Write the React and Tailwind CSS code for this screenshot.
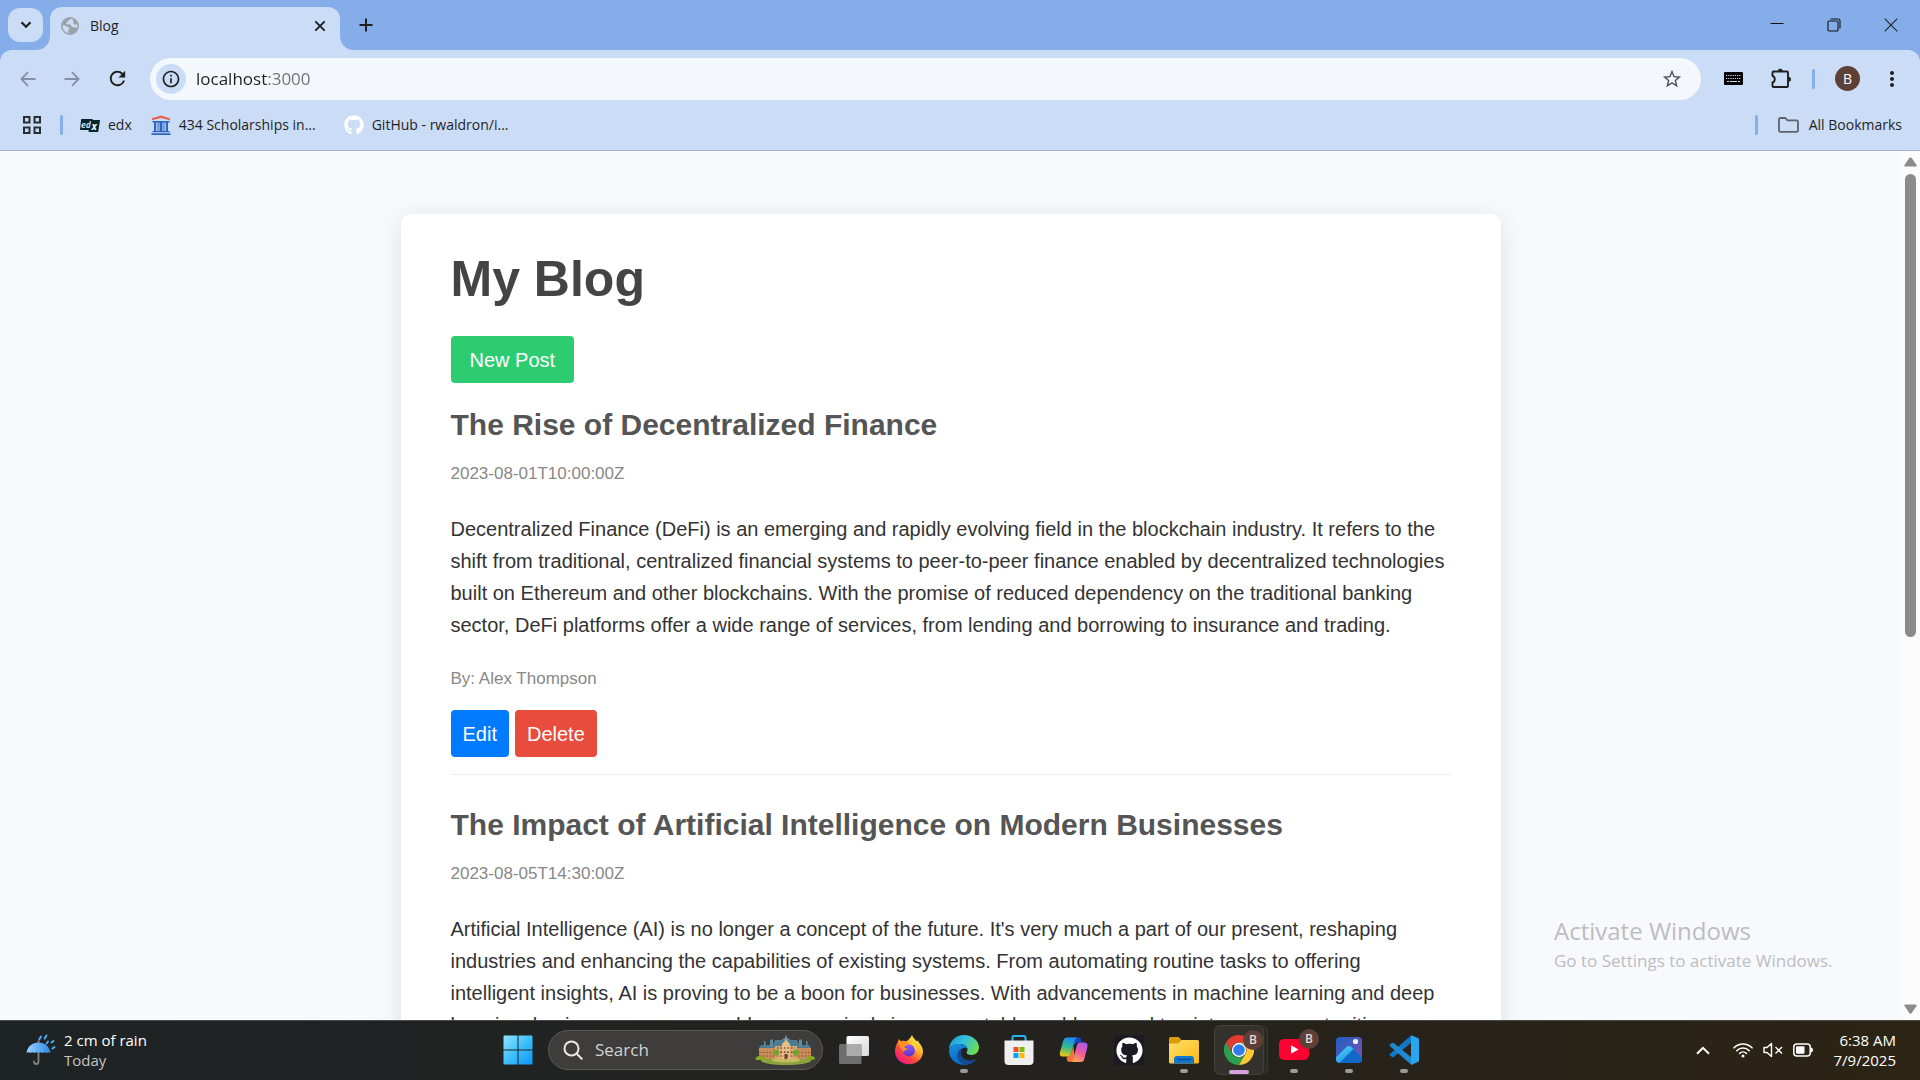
import React from "react";
import { MdOutlineInfo, MdStarOutline, MdMoreVert, MdRefresh } from "react-icons/md";
import { FaGithub } from "react-icons/fa";

const posts = [
  {
    title: "The Rise of Decentralized Finance",
    date: "2023-08-01T10:00:00Z",
    body: "Decentralized Finance (DeFi) is an emerging and rapidly evolving field in the blockchain industry. It refers to the shift from traditional, centralized financial systems to peer-to-peer finance enabled by decentralized technologies built on Ethereum and other blockchains. With the promise of reduced dependency on the traditional banking sector, DeFi platforms offer a wide range of services, from lending and borrowing to insurance and trading.",
    author: "Alex Thompson",
  },
  {
    title: "The Impact of Artificial Intelligence on Modern Businesses",
    date: "2023-08-05T14:30:00Z",
    body: "Artificial Intelligence (AI) is no longer a concept of the future. It's very much a part of our present, reshaping industries and enhancing the capabilities of existing systems. From automating routine tasks to offering intelligent insights, AI is proving to be a boon for businesses. With advancements in machine learning and deep learning, businesses can now address seemingly insurmountable problems and tap into new opportunities.",
  },
];

/* ---------- Browser chrome ---------- */

function Flare({ flip }) {
  return (
    <svg viewBox="0 0 14 14" className={flip ? "w-3.5 h-3.5 -scale-x-100" : "w-3.5 h-3.5"} aria-hidden="true">
      <path d="M14 0v14H0C8 14 14 8 14 0z" fill="#cbdcf6" />
    </svg>
  );
}

function TabStrip() {
  return (
    <header className="flex h-[50px] bg-[#85adea] text-[#1f1f1f]">
      <button aria-label="Search tabs" className="mt-2 ml-2 flex h-[34px] w-[35px] items-center justify-center rounded-xl bg-[#cbdcf6]">
        <svg viewBox="0 0 12 8" className="h-2 w-3" fill="none" stroke="#1f1f1f" strokeWidth="2.2"><path d="M1.5 1.3 6 5.8l4.5-4.5" /></svg>
      </button>
      <div className="-ml-[7px] flex items-end"><Flare /></div>
      <div className="mt-[7px] flex w-[290px] items-center rounded-t-xl bg-[#cbdcf6] pb-1.5 pl-[11px] pr-2.5">
        <svg viewBox="0 0 18 18" className="size-[18px]" aria-hidden="true">
          <circle cx="9" cy="9" r="9" fill="#9ba2aa" />
          <path d="M2 8c1 .3 3 .6 3.800 1.600.7.9 2.400.6 2.600 1.700.2 1-1.200 1.300-1.200 2.300v2.600C4 15.300 1.700 12.500 1.700 9.500zM9.500 1.800c-.2 1-1.300 1.500-2.200 1.800-.9.300-.2 1.700-1.300 2-.9.300-1.300.9-.8 1.500.8.900 3.300-.2 4.300.5 1.100.8.5 2 1.700 2.400 1.300.400 2.300-.4 3.300.2.700.4 1 .8 1.400 1.200.5-1.200.6-3 .2-4.200-1 .3-2.400.7-3.200 0-.9-.8 0-2-.7-2.800-.6-.8-.4-1.600.2-2.100z" fill="#cbdcf6" />
        </svg>
        <span className="ml-[11px] flex-1 text-sm">Blog</span>
        <button aria-label="Close tab" className="flex size-5 items-center justify-center">
          <svg viewBox="0 0 12 12" className="size-3" stroke="#1f1f1f" strokeWidth="1.900"><path d="M1.300 1.300l9.400 9.400M10.700 1.300l-9.400 9.400" /></svg>
        </button>
      </div>
      <div className="flex items-end"><Flare flip /></div>
      <button aria-label="New tab" className="flex w-6 items-center justify-center">
        <svg viewBox="0 0 14 14" className="size-3.5" stroke="#1f1f1f" strokeWidth="2"><path d="M7 .5v13M.5 7h13" /></svg>
      </button>
      <div className="ml-auto flex">
        <button aria-label="Minimize" className="flex w-[57px] items-center justify-center">
          <svg viewBox="0 0 14 14" className="size-3.5" stroke="#111" strokeWidth="1"><path d="M.5 5.500h13" /></svg>
        </button>
        <button aria-label="Restore" className="flex w-[57px] items-center justify-center">
          <svg viewBox="0 0 14 14" className="size-3.5" stroke="#111" strokeWidth="1.100" fill="none"><rect x="1" y="3" width="10" height="10" rx="1" /><path d="M3.500 1h7.500a2 2 0 0 1 2 2v7.500" /></svg>
        </button>
        <button aria-label="Close" className="flex w-[58px] items-center justify-center">
          <svg viewBox="0 0 14 14" className="size-3.5" stroke="#222" strokeWidth="1.100"><path d="M.7.7l12.600 12.600M13.300.7.7 13.300" /></svg>
        </button>
      </div>
    </header>
  );
}

function Arrow({ flip }) {
  return (
    <svg viewBox="0 0 16 16" className={flip ? "size-4 -scale-x-100" : "size-4"} fill="none" stroke="#8390a6" strokeWidth="1.800">
      <path d="M15.500 8H1.500M8 1.200 1.400 8 8 14.800" />
    </svg>
  );
}

function Toolbar() {
  return (
    <div className="bg-[#85adea]">
      <div className="flex h-[57px] items-center rounded-t-xl bg-[#cbdcf6] pl-3">
        <button aria-label="Back" className="flex w-8 justify-center"><Arrow /></button>
        <button aria-label="Forward" className="ml-3 flex w-8 justify-center"><Arrow flip /></button>
        <button aria-label="Reload" className="ml-[13px] flex w-8 justify-center"><MdRefresh className="size-[23px] text-[#1f1f1f]" /></button>
        <div className="ml-[17px] flex h-[42px] flex-1 items-center rounded-full bg-[#f4f8fd] pl-1.5 pr-[18px]">
          <button aria-label="View site information" className="flex size-[30px] items-center justify-center rounded-full bg-[#cbdcf6]">
            <MdOutlineInfo className="size-5 text-[#1f1f1f]" />
          </button>
          <input
            aria-label="Address"
            defaultValue="localhost:3000"
            className="ml-2.5 min-w-0 flex-1 bg-[linear-gradient(90deg,#1f1f1f_71px,#6b7076_71px)] bg-clip-text text-[17px] text-transparent outline-none"
          />
          <button aria-label="Bookmark this tab"><MdStarOutline className="size-[22px] text-[#50555c]" /></button>
        </div>
        <button aria-label="Keyboard extension" className="ml-[23px]">
          <svg viewBox="0 0 19 13" className="h-[13px] w-[19px]">
            <rect width="19" height="13" rx="1" fill="#000" />
            <path d="M2 3.500h15M2 6.500h15" stroke="#cbdcf6" strokeWidth="1.200" strokeDasharray="1.200 1" />
            <path d="M3 9.500h2M6 9.500h7M14 9.500h2" stroke="#cbdcf6" strokeWidth="1.200" />
          </svg>
        </button>
        <button aria-label="Extensions" className="ml-[27px]">
          <svg viewBox="0 0 22 22" className="size-[22px]">
            <path d="M2.500 4.500q0-1 1-1H17q1 0 1 1V18q0 1-1 1H3.500q-1 0-1-1v-3.500c3-.7 3-5.800 0-6.500z" fill="none" stroke="#1f1f1f" strokeWidth="1.900" strokeLinejoin="round" />
            <path d="M7.800 3.200a2.500 2.500 0 0 1 5 0zM18.500 8.700a2.500 2.500 0 0 1 0 5z" fill="#1f1f1f" />
          </svg>
        </button>
        <span className="ml-5 h-5 w-[3px] rounded bg-[#87aeea]" />
        <button aria-label="Profile" className="ml-5 flex size-[25px] items-center justify-center rounded-full bg-[#5d4037] text-sm text-white">B</button>
        <button aria-label="Menu" className="ml-5 mr-4"><MdMoreVert className="size-6 text-[#1f1f1f]" /></button>
      </div>
    </div>
  );
}

function Bookmarks() {
  return (
    <nav aria-label="Bookmarks" className="flex h-11 items-center border-b border-[#a0b4d8] bg-[#cbdcf6] pb-2 pl-[22px] pr-[18px] text-sm text-[#1f1f1f]">
      <button aria-label="Apps">
        <svg viewBox="0 0 20 20" className="size-5" fill="none" stroke="#2a2e33" strokeWidth="2"><path d="M2 2h5.500v5.500H2zM12.500 2H18v5.500h-5.500zM2 12.500h5.500V18H2zM12.500 12.500H18V18h-5.500z" /></svg>
      </button>
      <span className="ml-[18px] h-5 w-[3px] rounded bg-[#87aeea]" />
      <a href="#edx" className="ml-[17px] flex items-center gap-2">
        <svg viewBox="0 0 20 14" className="h-3.5 w-5">
          <path d="M1.200 1h11.500l-1.600 11H0zM10 2h10l-1.800 12H8.500z" fill="#02262b" />
          <text x="1" y="9.500" fontSize="8.500" fontWeight="700" fontStyle="italic" fill="#cfdcf0">ed</text>
          <text x="11.500" y="11.500" fontSize="10" fontWeight="700" fontStyle="italic" fill="#fff">x</text>
        </svg>
        edx
      </a>
      <a href="#scholarships" className="ml-[19px] flex items-center gap-2">
        <svg viewBox="0 0 20 20" className="size-5">
          <path d="M1 5.200v-2L10 .5l9 2.700v2L10 2.900z" fill="#e8604c" />
          <path d="M1.500 6h17v1.500h-17zM1.500 16h17v1.200h-17zM.5 18.300h19V20H.5zM3 7h2.200v9H3zM6.500 7h1v9h-1zM8.500 7h3v9h-3zM12.500 7h1v9h-1zM14.800 7H17v9h-2.200z" fill="#2c66bf" />
        </svg>
        434 Scholarships in...
      </a>
      <a href="#github" className="ml-7 flex items-center gap-2">
        <FaGithub className="size-5 text-white" />
        GitHub - rwaldron/i...
      </a>
      <span className="ml-auto h-5 w-[3px] rounded bg-[#87aeea]" />
      <button className="ml-5 flex items-center gap-2.5">
        <svg viewBox="0 0 21 16" className="h-4 w-[21px]" fill="none" stroke="#5f6368" strokeWidth="1.800"><path d="M1 13V2.500Q1 1 2.500 1h4.800l2.200 2.300h9Q20 3.300 20 4.800V13q0 1.800-1.500 1.800h-16Q1 14.800 1 13z" /></svg>
        All Bookmarks
      </button>
    </nav>
  );
}

/* ---------- Page ---------- */

function Post({ title, date, body, author }) {
  return (
    <article className="mb-[26px] border-b border-[#eeeeee] pb-[17px]">
      <h2 className="text-3xl leading-[48px] font-bold text-[#555]">{title}</h2>
      <p className="mt-[11px] text-[17px] leading-[27px] text-[#888]">{date}</p>
      <p className="mt-[26px] text-xl leading-8">{body}</p>
      {author && <p className="mt-6 text-[17px] leading-[27px] text-[#888]">By: {author}</p>}
      <div className="mt-[18px] flex gap-1.5 text-xl leading-6 text-white">
        <button className="rounded bg-[#007bff] px-[12px] pt-3 pb-[11px]">Edit</button>
        <button className="rounded bg-[#e74c3c] px-[12px] pt-3 pb-[11px]">Delete</button>
      </div>
    </article>
  );
}

function Page() {
  return (
    <div className="relative flex min-h-0 flex-1 bg-[#f7f9fd]">
      <main className="min-w-0 flex-1 overflow-hidden px-6 pt-[63px] font-['Liberation_Sans',Arial,sans-serif] text-[#333]">
        <div className="mx-auto w-full max-w-[1100px] rounded-[10px] bg-white px-[50px] py-[25px] shadow-[0_4px_25px_rgba(0,0,0,0.1)]">
          <h1 className="text-[50px] leading-[80px] font-bold text-[#444]">My Blog</h1>
          <a href="#new" className="mt-[17px] inline-block rounded bg-[#2ecc71] px-[19px] pt-3 pb-[11px] text-xl leading-6 text-white">New Post</a>
          <div className="mt-[18px]">
            {posts.map((p) => <Post key={p.date} {...p} />)}
          </div>
        </div>
      </main>
      <div className="flex w-[19px] flex-col items-center bg-[#fcfcfc] py-1.5">
        <svg viewBox="0 0 13 10" className="h-2.5 w-[13px]" fill="#8b8b8b"><path d="M5.500.8q1-1.200 2 0l5 7.200q.8 1.500-1 1.500h-10q-1.800 0-1-1.500z" /></svg>
        <div className="mt-[7px] h-[54%] w-[11px] rounded-full bg-[#8b8b8b]" />
        <svg viewBox="0 0 13 10" className="mt-auto h-2.5 w-[13px] -scale-y-100" fill="#8b8b8b"><path d="M5.500.8q1-1.200 2 0l5 7.200q.8 1.500-1 1.500h-10q-1.800 0-1-1.500z" /></svg>
      </div>
      <aside className="pointer-events-none absolute right-20 bottom-[46px] w-[286px] text-[#bcbdc0]">
        <p className="text-2xl leading-[34px]">Activate Windows</p>
        <p className="text-[17px] leading-[26px]">Go to Settings to activate Windows.</p>
      </aside>
    </div>
  );
}

/* ---------- Taskbar icons ---------- */

const icon = "size-[30px]";

const StartIcon = () => (
  <svg viewBox="0 0 30 30" className={icon}>
    <defs><linearGradient id="win" x1="0" y1="0" x2="1" y2="1"><stop offset="0" stopColor="#8fe3ff" /><stop offset=".5" stopColor="#3fc0fb" /><stop offset="1" stopColor="#0a95f5" /></linearGradient></defs>
    <path d="M1.500.5H14.500V14.500H.5V1.500q0-1 1-1zM15.500.5H28.500q1 0 1 1V14.500h-14zM.5 15.500h14v14h-13q-1 0-1-1zM15.500 15.500h14v13q0 1-1 1h-13z" fill="url(#win)" />
  </svg>
);
const TaskViewIcon = () => (
  <svg viewBox="0 0 30 30" className={icon}>
    <defs><linearGradient id="tv" x1="0" y1="0" x2="1" y2="1"><stop offset="0" stopColor="#fff" /><stop offset="1" stopColor="#d8d8d8" /></linearGradient></defs>
    <rect x="7.500" y="1" width="22.500" height="20" rx="1.500" fill="url(#tv)" />
    <rect x="0" y="9" width="22.500" height="20" rx="1.500" fill="#6e6e6e" />
    <path d="M7.500 9h15v12h-15z" fill="#ababab" />
  </svg>
);
const FirefoxIcon = () => (
  <svg viewBox="0 0 30 30" className={icon}>
    <defs>
      <linearGradient id="ffx" x1=".85" y1=".1" x2=".2" y2=".95"><stop offset="0" stopColor="#fff44f" /><stop offset=".35" stopColor="#ffb02e" /><stop offset=".65" stopColor="#ff4a3a" /><stop offset="1" stopColor="#f0148c" /></linearGradient>
      <linearGradient id="ffp" x1="0" y1="0" x2="0" y2="1"><stop offset="0" stopColor="#9059ff" /><stop offset="1" stopColor="#5b35c4" /></linearGradient>
    </defs>
    <path d="M18 0c1 3 3 4 4.500 6.200l1.700-.7c0 1 .3 1.600 1 2.500 2 2.200 3.800 4.700 3.800 8.500a14 12.800 0 0 1-28 0c0-4 1-7 3-9.800L4.500 4 7 6.200C9 5.600 10.500 5.800 12 6.500 14 5.500 16.500 3 18 0z" fill="url(#ffx)" />
    <circle cx="15" cy="15.500" r="6" fill="url(#ffp)" />
    <path d="M4 7.500C6 6 9 5.800 11.500 7.200l3.500.6c-.3 1.600-1.500 2.400-3.500 2.800l-1.500 2.600c1.500-.5 3 .2 4 1.400-2-.2-3.200.8-4.500 2.200C7 15 5.500 11 4 7.500z" fill="#ff9322" />
    <path d="M14 8c4 0 7.500 3 7 8 2-2 1.500-6-.5-8.500z" fill="#ffd83a" />
  </svg>
);
const EdgeIcon = () => (
  <svg viewBox="0 0 30 30" className={icon}>
    <defs>
      <linearGradient id="eg" x1="0" y1=".2" x2="1" y2=".6"><stop offset="0" stopColor="#1e9de0" /><stop offset=".5" stopColor="#35c1d8" /><stop offset="1" stopColor="#6fe04a" /></linearGradient>
      <linearGradient id="eb" x1="0" y1="0" x2=".6" y2="1"><stop offset="0" stopColor="#1790e0" /><stop offset="1" stopColor="#0a63bd" /></linearGradient>
    </defs>
    <path d="M0 14C.5 6 7 0 15 0s15 5.500 15 12.500c0 4.500-3.500 7.500-7.500 7.500-3 0-5-1-5-2.200 0-.7 1-1.300 1-3.300 0-3-3-5.500-7-5.500C6 9 1.500 11 0 14z" fill="url(#eg)" />
    <path d="M0 15.500C.5 11.500 5 9 10 9c4.500 0 8 2.200 8.500 5-2-2.500-7-1.500-7 3.500 0 6 6 9.500 11 8.500 2-.4 3.500-1.200 4.500-2C24.500 27.800 20 30 15 30 6.500 30 0 23.500 0 15.500z" fill="url(#eb)" />
    <path d="M11.500 17.500c0-2 .8-3.500 2-4.200-3 .7-5 3.500-5 7.200 0 4.500 3.500 9 8.500 9.300 4-.4 8-2.500 10.300-6-5.300 3.700-15.800 1.200-15.800-6.300z" fill="#134a93" />
  </svg>
);
const StoreIcon = () => (
  <svg viewBox="0 0 30 30" className={icon}>
    <path d="M8.500 6V2.500Q8.500 1 10 1h10q1.500 0 1.500 1.500V6" fill="none" stroke="#22b4ea" strokeWidth="2" />
    <path d="M.5 5.500h29V26q0 4-4 4h-21q-4 0-4-4z" fill="#efefef" />
    <path d="M9.500 12h5v5h-5z" fill="#f25022" /><path d="M15.500 12h5v5h-5z" fill="#7fba00" /><path d="M9.500 18h5v5h-5z" fill="#00a4ef" /><path d="M15.500 18h5v5h-5z" fill="#ffb900" />
  </svg>
);
const CopilotIcon = () => (
  <svg viewBox="0 0 30 30" className={icon}>
    <defs>
      <linearGradient id="cl" x1=".5" y1="0" x2=".3" y2="1"><stop offset="0" stopColor="#1b8cf2" /><stop offset=".5" stopColor="#34b98b" /><stop offset="1" stopColor="#f2c811" /></linearGradient>
      <linearGradient id="cr" x1=".7" y1="0" x2=".3" y2="1"><stop offset="0" stopColor="#a55bf0" /><stop offset=".5" stopColor="#ee5a9c" /><stop offset="1" stopColor="#ffa552" /></linearGradient>
    </defs>
    <path d="M8 2.500h11c2.500 0 3 1 3.800 5h-3.300c-2 0-3 .8-3.600 2.500z" fill="#1746c7" />
    <path d="M8.500 2.500H18c-1.500 1-2 2-2.500 4l-3.200 11.500c-.8 2.500-1.800 3.500-4 3.500H4c-3 0-3.700-2-3-4.500l3.200-11c.8-2.500 1.800-3.500 4.300-3.500z" fill="url(#cl)" />
    <path d="M8 21.500c2.500 0 3.600-1 4.300-3.500l2.200-7 1 10-1.300 3.500c-.5 1.500-1.500 2.500-3.200 2.500-3.500 0-3.500-3.500-3-5.500z" fill="#f4743b" />
    <path d="M21.500 27H12c1.500-1 2-2 2.500-4l3.200-12c.7-2.500 1.800-3.500 4-3.500H25c3.500 0 4 2.500 3.300 5l-2.700 10.500c-.6 3-1.600 4-4.100 4z" fill="url(#cr)" />
  </svg>
);
const GithubTile = () => (
  <span className="flex size-[30px] items-center justify-center bg-[#1c1922]"><FaGithub className="size-[27px] text-white" /></span>
);
const FolderIcon = () => (
  <svg viewBox="0 0 30 30" className={icon}>
    <defs><linearGradient id="fo" x1="0" y1="0" x2="1" y2="1"><stop offset="0" stopColor="#ffdf70" /><stop offset="1" stopColor="#fbb912" /></linearGradient></defs>
    <path d="M0 3.500Q0 2 1.500 2h7.500q1 0 1.800 1L13 6v3H0z" fill="#dd9b06" />
    <path d="M0 8.500h9L12.500 5h16Q30 5 30 6.500V27q0 1.500-1.500 1.500h-27Q0 28.500 0 27z" fill="url(#fo)" />
    <path d="M5 28.500V24q0-3 3-3h14q3 0 3 3v4.500z" fill="#1276cf" /><path d="M8.500 24.500h13" stroke="#0b4a94" strokeWidth="1.400" />
  </svg>
);
const ChromeIcon = () => (
  <svg viewBox="0 0 30 30" className={icon}>
    <path d="M15 0a15 15 0 0 1 13 7.500H15a7.500 7.500 0 0 0-6.500 11.250L2 7.500A15 15 0 0 1 15 0z" fill="#e33b2e" />
    <path d="M2 7.500l6.500 11.250A7.500 7.500 0 0 0 21.500 18.750L15 30A15 15 0 0 1 2 7.500z" fill="#2da04e" />
    <path d="M28 7.500A15 15 0 0 1 15 30l6.500-11.250A7.500 7.500 0 0 0 15 7.500z" fill="#fcc934" />
    <circle cx="15" cy="15" r="7.200" fill="#fff" /><circle cx="15" cy="15" r="5.800" fill="#2f7bf0" />
  </svg>
);
const YoutubeIcon = () => (
  <svg viewBox="0 0 30 30" className={icon}><rect x="0" y="4" width="30" height="21" rx="5" fill="#ff0033" /><path d="M12 10.300v8.400l7.500-4.200z" fill="#fff" /></svg>
);
const PhotosIcon = () => (
  <svg viewBox="0 0 30 30" className={icon}>
    <defs>
      <linearGradient id="ph" x1="0" y1="0" x2="1" y2="1"><stop offset="0" stopColor="#1d5fc0" /><stop offset=".6" stopColor="#5a58b8" /><stop offset="1" stopColor="#8a4fa8" /></linearGradient>
      <linearGradient id="pm" x1=".2" y1="0" x2=".9" y2="1"><stop offset="0" stopColor="#4fdcfb" /><stop offset="1" stopColor="#1482dd" /></linearGradient>
    </defs>
    <rect x="2" y="2" width="26" height="26" rx="4" fill="url(#ph)" />
    <path d="M2 22.500 12.500 12q2.500-2.200 5 0L28 22.500V25q-.5 3-4 3H6q-3.500 0-4-3z" fill="#1268c8" />
    <path d="M2 22.500 12.500 12q2.500-2.200 5 0l2 2L5.500 28Q2.500 27.500 2 25z" fill="url(#pm)" />
    <circle cx="21.500" cy="6.500" r="2.600" fill="#f1f3fb" />
  </svg>
);
const VscodeIcon = () => (
  <svg viewBox="0 0 30 30" className={icon}>
    <path d="M1 20.500 3 22q1 .6 2-.2L22 8V.5L.8 19q-.6.800.2 1.500z" fill="#0f78c4" />
    <path d="M1 9.500 3 8q1-.6 2 .2L22 22v7.500L.8 11q-.6-.8.200-1.500z" fill="#1f8ad2" />
    <path d="M22 .3 29 3q1 .6 1 1.500v21q0 .9-1 1.500l-7 3z" fill="#2aa5f0" />
  </svg>
);
const UmbrellaIcon = () => (
  <svg viewBox="0 0 30 32" className="h-8 w-[30px]">
    <defs><linearGradient id="um" x1="0" y1="0" x2="1" y2="0"><stop offset="0" stopColor="#9ad0ff" /><stop offset="1" stopColor="#2b8ae6" /></linearGradient></defs>
    <path d="M12.500 7.500v20q0 2.500-2.200 2.500T8 27.500" fill="none" stroke="#8a8080" strokeWidth="1.800" strokeLinecap="round" />
    <path d="M.5 19C1.500 12 6.500 8.500 12.500 8.500S23.500 12 24.500 19q-2-1.500-4 0-2-1.500-4 0-2-1.500-4 0-2-1.500-4 0-2-1.500-4 0-2-1.500-4 0z" fill="url(#um)" />
    <path d="M15 2.500l-1.800 3M20.500 1.500l-1.800 3M27.500 7l-2 1.500M22 7.500l-1.500 2M28.500 13l-2 1.500" stroke="#4fb0f7" strokeWidth="1.900" strokeLinecap="round" />
  </svg>
);
const PalaceIcon = () => (
  <svg viewBox="0 0 60 32" className="h-8 w-[60px]" aria-hidden="true">
    <ellipse cx="31" cy="26.500" rx="25" ry="4.500" fill="#8ba23f" /><ellipse cx="31" cy="26" rx="14" ry="2.500" fill="#c3bd5c" />
    <path d="M4 14h52v11H4z" fill="#c98d5a" /><path d="M20 11h22v14H20z" fill="#dda870" />
    <path d="M4 14l2-3h12l2-5h6l3-2h4l3 2h6l2 5h10l2 3H42v-2H20v2z" fill="#4f7c93" />
    <path d="M31 .5 33 7h-4z" fill="#8a9aa3" /><path d="M27 10l4-4 4 4v15h-8z" fill="#e9bd86" />
    <path d="M4 18.500h52M4 22h52" stroke="#8d5a3c" strokeWidth="1" strokeDasharray="2 1.500" />
    <path d="M22 14h18M22 18h18" stroke="#7a5742" strokeWidth="1.600" strokeDasharray="1.500 2" />
    <path d="M15 5.500h3v7h-3zM44 5.500h3v7h-3zM9 7h1.500v5H9zM51 7h1.500v5H51z" fill="#5d8ba1" />
    <circle cx="21" cy="18.500" r="3" fill="#6fa52e" /><circle cx="41" cy="18.500" r="3" fill="#6fa52e" />
    <path d="M0 25q3-5 6-2 4-1 5 3H2zM52 25q1-4 4-3 4 0 4 3l-3 1z" fill="#86ad1f" />
    <path d="M29.500 20h3v5h-3z" fill="#6e4530" />
  </svg>
);

const apps = [
  { name: "Task View", Icon: TaskViewIcon },
  { name: "Firefox", Icon: FirefoxIcon },
  { name: "Edge", Icon: EdgeIcon, open: true },
  { name: "Microsoft Store", Icon: StoreIcon },
  { name: "Copilot", Icon: CopilotIcon },
  { name: "GitHub", Icon: GithubTile },
  { name: "File Explorer", Icon: FolderIcon, open: true },
  { name: "Chrome", Icon: ChromeIcon, active: true, badge: true },
  { name: "YouTube", Icon: YoutubeIcon, open: true, badge: true },
  { name: "Photos", Icon: PhotosIcon, open: true },
  { name: "Visual Studio Code", Icon: VscodeIcon, open: true },
];

function AppButton({ name, Icon, open, active, badge }) {
  return (
    <button
      aria-label={name}
      className={
        active
          ? "relative flex h-[50px] w-[50px] items-center justify-center rounded-md border border-[#41403b] bg-[#33322d] shadow-[3px_0_0_#2a2924,4px_0_0_#3a3934]"
          : "relative flex h-[50px] w-[50px] items-center justify-center"
      }
    >
      <Icon />
      {badge && <span className="absolute top-1 right-0 flex size-5 items-center justify-center rounded-full bg-[#5d4037] text-xs font-semibold text-[#e4dad6]">B</span>}
      {open && <span className="absolute bottom-0.5 h-1 w-2 rounded-full bg-[#9a9a98]" />}
      {active && <span className="absolute bottom-0 h-1 w-5 rounded-full bg-[#d9a0e0]" />}
    </button>
  );
}

function Taskbar() {
  return (
    <footer className="grid h-[60px] grid-cols-[1fr_auto_1fr] items-center border-t border-[#4a4b48] bg-linear-to-r from-[#1e2325] via-[#23221f] to-[#2c2414] pb-px text-[15px] text-white">
      <button className="flex w-fit items-center gap-2 pl-[26px] text-left leading-5">
        <UmbrellaIcon />
        <span>2 cm of rain<br /><span className="text-[#c3c4c4]">Today</span></span>
      </button>
      <div className="flex items-center pl-3">
        <button aria-label="Start" className="mr-[15px]"><StartIcon /></button>
        <label className="mr-[6px] flex h-10 w-[275px] items-center rounded-full border border-[#5a5a58] bg-[#3e3d3c] pr-[7px] pl-3.5">
          <svg viewBox="0 0 20 20" className="size-5" fill="none" stroke="#e8e8e8" strokeWidth="2"><circle cx="8.500" cy="8.500" r="7" /><path d="M13.500 13.500l5.200 5.200" strokeLinecap="round" /></svg>
          <input aria-label="Search" placeholder="Search" className="ml-3 min-w-0 flex-1 text-[17px] outline-none placeholder:text-[#d2d2d2]" />
          <PalaceIcon />
        </label>
        <div className="flex gap-[5px]">{apps.map((a) => <AppButton key={a.name} {...a} />)}</div>
      </div>
      <div className="flex items-center justify-end pr-6">
        <button aria-label="Show hidden icons">
          <svg viewBox="0 0 14 9" className="h-[9px] w-3.5" fill="none" stroke="#fff" strokeWidth="2"><path d="M1 7.800 7 1.800l6 6" /></svg>
        </button>
        <button aria-label="Network, volume and battery" className="ml-[23px] flex items-center gap-2.5">
          <svg viewBox="0 0 20 16" className="h-4 w-5" fill="none" stroke="#fff" strokeWidth="1.600" strokeLinecap="round"><path d="M1 5.800a12.500 12.500 0 0 1 18 0M3.800 8.700a8.600 8.600 0 0 1 12.400 0M6.600 11.300a4.900 4.900 0 0 1 6.800 0" /><circle cx="10" cy="14" r="1.500" fill="#fff" stroke="none" /></svg>
          <svg viewBox="0 0 20 16" className="h-4 w-5" fill="none" stroke="#fff" strokeWidth="1.400" strokeLinejoin="round"><path d="M1 5.500h3L8.500 1.500v13L4 10.500H1zM12.500 5l6.500 6.500M19 5l-6.500 6.500" /></svg>
          <svg viewBox="0 0 20 14" className="h-3.5 w-5"><rect x=".8" y="1" width="16.400" height="12" rx="3" fill="none" stroke="#fff" strokeWidth="1.500" /><rect x="3" y="3.200" width="8.500" height="7.600" rx="1" fill="#fff" /><path d="M18 4.500q2 .3 2 2.500t-2 2.500z" fill="#fff" /></svg>
        </button>
        <div className="ml-[21px] text-right leading-5">6:38 AM<br />7/9/2025</div>
      </div>
    </footer>
  );
}

export default function App() {
  return (
    <div className="flex h-screen flex-col overflow-hidden font-['Open_Sans','Noto_Sans',sans-serif]">
      <TabStrip />
      <Toolbar />
      <Bookmarks />
      <Page />
      <Taskbar />
    </div>
  );
}
